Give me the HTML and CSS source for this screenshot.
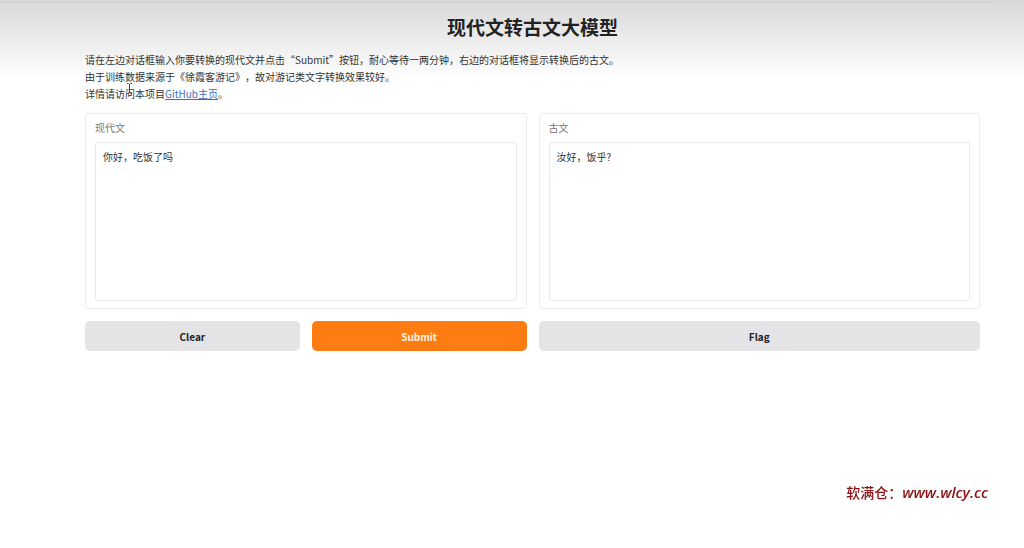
FILE: index.html
```
<!DOCTYPE html>
<html lang="zh-CN">
<head>
  <meta charset="UTF-8" />
  <meta name="viewport" content="width=device-width, initial-scale=1" />
  <title>现代文转古文大模型</title>
  <link rel="stylesheet" href="styles.css">
</head>
<body>
  <div class="topbar"></div>
  <main class="container">
    <h1>现代文转古文大模型</h1>
    <div class="intro">
      <p>请在左边对话框输入你要转换的现代文并点击“Submit”按钮，耐心等待一两分钟，右边的对话框将显示转换后的古文。</p>
      <p>由于训练数据来源于《徐霞客游记》，故对游记类文字转换效果较好。</p>
      <p>详情请访问本项目<a href="#">GitHub主页</a>。</p>
      <svg class="cursor" width="7" height="11" viewBox="0 0 7 11" fill="none" stroke="#444" aria-hidden="true">
        <path d="M1 .5h1.5l1 1 1-1H6M3.500 1.500v8M1 10.500h1.500l1-1 1 1H6" />
      </svg>
    </div>

    <form class="columns">
      <div class="column">
        <div class="panel">
          <label for="modern">现代文</label>
          <textarea id="modern">你好，吃饭了吗</textarea>
        </div>
        <div class="actions">
          <button type="reset">Clear</button>
          <button type="button" class="primary">Submit</button>
        </div>
      </div>
      <div class="column">
        <div class="panel">
          <label for="ancient">古文</label>
          <textarea id="ancient" readonly>汝好，饭乎?</textarea>
        </div>
        <div class="actions">
          <button type="button">Flag</button>
        </div>
      </div>
    </form>
  </main>
  <div class="watermark">软满仓：<span class="site">www.wlcy.cc</span></div>
</body>
</html>
```
FILE: styles.css
```
* {
  box-sizing: border-box;
}
body {
  margin: 0;
  font-family: "Noto Sans CJK SC", sans-serif;
  font-size: 10px;
  line-height: 17px;
  text-spacing-trim: space-all;
  color: #333;
  background: #fff linear-gradient(#d9d9d9, #fff 80px) no-repeat;
}
.topbar {
  height: 3px;
  margin-right: 32px;
  background: linear-gradient(#dcdcdc, #cecece);
}
.container {
  padding: 10px 44px 0 85px;
}
h1 {
  margin: 0 0 10px;
  font-size: 19px;
  line-height: 28px;
  text-align: center;
  color: #222;
}
.intro {
  position: relative;
  margin-bottom: 11px;
}
.intro p {
  margin: 0;
}
.intro a {
  color: #3f6cb8;
}
/* text cursor resting over the intro */
.cursor {
  position: absolute;
  left: 41px;
  top: 32px;
}
.columns {
  display: flex;
  gap: 12px;
}
.column {
  flex: 1;
  min-width: 0;
}
.panel {
  padding: 5px 9px 7px;
  border: 1px solid #ececec;
  border-radius: 3px;
  background: #fff;
}
.panel label {
  display: block;
  margin-bottom: 6px;
  color: #777;
}
textarea {
  display: block;
  width: 100%;
  height: 159px;
  padding: 5px 7px;
  border: 1px solid #e9e9e9;
  border-radius: 3px;
  background: #fff;
  font: inherit;
  color: #333;
  resize: none;
  outline: none;
}
.actions {
  display: flex;
  gap: 12px;
  margin-top: 12px;
}
button {
  flex: 1;
  height: 30px;
  padding: 0;
  border: none;
  border-radius: 5px;
  background: #e4e4e7;
  font: bold 10px "Noto Sans CJK SC", sans-serif;
  color: #222;
  cursor: pointer;
}
button.primary {
  background: #ff7c12;
  color: #fff3e0;
}
.watermark {
  position: fixed;
  right: 36px;
  bottom: 46px;
  font-size: 14px;
  line-height: 20px;
  font-weight: 500;
  color: #8b1010;
}
.site {
  font-family: "Open Sans", sans-serif;
  font-size: 15px;
  font-weight: 600;
  font-style: italic;
}
```
